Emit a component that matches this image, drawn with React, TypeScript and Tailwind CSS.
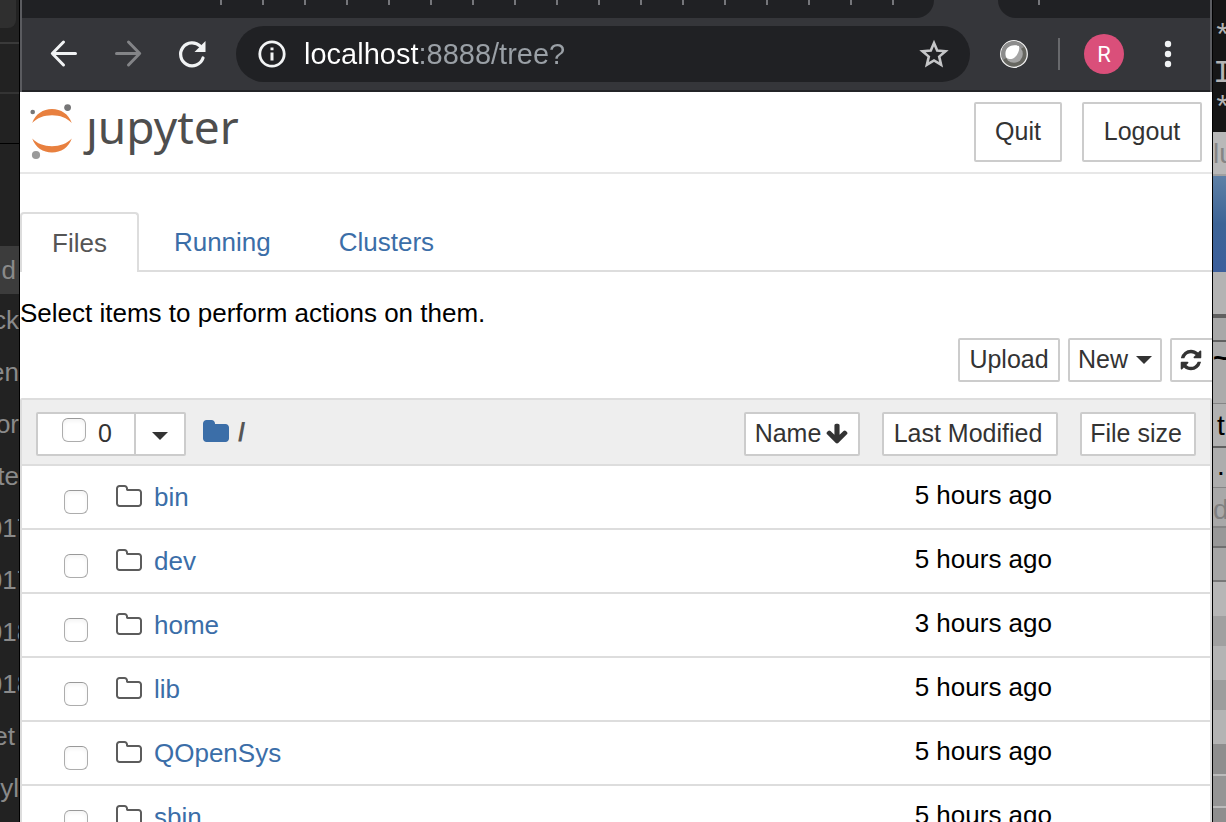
import type { ReactNode } from "react";

const FOLDER_OPEN_PATH =
  "M1600 1312v-704q0-40-28-68t-68-28h-704q-40 0-68-28t-28-68v-64q0-40-28-68t-68-28h-320q-40 0-68 28t-28 68v960q0 40 28 68t68 28h1216q40 0 68-28t28-68zm128-704v704q0 92-66 158t-158 66h-1216q-92 0-158-66t-66-158v-960q0-92 66-158t158-66h320q92 0 158 66t66 158v32h672q92 0 158 66t66 158z";
const FOLDER_PATH =
  "M1728 608v704q0 92-66 158t-158 66h-1216q-92 0-158-66t-66-158v-960q0-92 66-158t158-66h320q92 0 158 66t66 158v32h672q92 0 158 66t66 158z";
const REFRESH_PATH =
  "M1639 1056q0 5-1 7-64 268-268 434.5t-478 166.5q-146 0-282.5-55t-243.5-157l-129 129q-19 19-45 19t-45-19-19-45v-448q0-26 19-45t45-19h448q26 0 45 19t19 45-19 45l-137 137q71 66 161 102t187 36q134 0 250-65t186-179q11-17 53-117 8-23 30-23h192q13 0 22.5 9.5t9.5 22.5zm25-800v448q0 26-19 45t-45 19h-448q-26 0-45-19t-19-45 19-45l138-138q-148-137-349-137-134 0-250 65t-186 179q-11 17-53 117-8 23-30 23h-199q-13 0-22.5-9.5t-9.5-22.5v-7q65-268 270-434.5t480-166.5q146 0 284 55.5t245 156.5l130-129q19-19 45-19t45 19 19 45z";
const ARROW_DOWN_PATH =
  "M1675 832q0 53-37 90l-651 652q-39 37-91 37-53 0-90-37l-651-652q-38-36-38-90 0-53 38-91l74-75q39-37 91-37 53 0 90 37l294 294v-704q0-52 38-90t90-38h128q52 0 90 38t38 90v704l294-294q37-37 90-37 52 0 91 37l75 75q37 39 37 91z";

function Glyph({ d, className }: { d: string; className: string }) {
  return (
    <svg viewBox="0 0 1792 1792" fill="currentColor" aria-hidden="true" className={className}>
      <path d={d} />
    </svg>
  );
}

function Caret() {
  return (
    <svg viewBox="0 0 16 8" fill="currentColor" aria-hidden="true" className="h-2 w-4 shrink-0">
      <path d="M0 0h16L8 8z" />
    </svg>
  );
}

const sidebarItems = [
  { text: "d", className: "h-12 justify-end bg-[#3c3c3c] pr-[3px]" },
  { text: "ck", className: "h-[52px] justify-end" },
  { text: "en", className: "h-[52px] justify-end" },
  { text: "or", className: "h-[52px] justify-end" },
  { text: "te", className: "h-[52px] justify-end" },
  { text: "017", className: "h-[52px] justify-center" },
  { text: "017", className: "h-[52px] justify-center" },
  { text: "018", className: "h-[52px] justify-center" },
  { text: "018", className: "h-[52px] justify-center" },
  { text: "et", className: "h-[52px] justify-end pr-1" },
  { text: "yl", className: "h-[52px] justify-end" },
];

function LeftBackdrop() {
  return (
    <div className="flex w-5 shrink-0 flex-col overflow-hidden border-r border-black bg-[#222] text-[26px] text-[#8a8a8a]">
      <div className="h-11 shrink-0 border-b-2 border-[#3a3a3a]">
        <div className="h-7 w-4 rounded-br-lg bg-[#2f2f2f]" />
      </div>
      <div className="h-[50px] shrink-0 border-b-2 border-[#343434]" />
      <div className="h-[50px] shrink-0 border-b border-black" />
      <div className="h-[102px] shrink-0" />
      {sidebarItems.map((item, i) => (
        <div key={i} className={`flex shrink-0 items-center overflow-hidden ${item.className}`}>
          {item.text}
        </div>
      ))}
    </div>
  );
}

function RightBackdrop() {
  return (
    <div className="flex w-[14px] shrink-0 flex-col overflow-hidden border-l border-black bg-[#a4a4a4] text-[28px] text-black *:shrink-0">
      <div className="h-[132px] overflow-hidden bg-[#161616] pt-5 font-['Liberation_Mono'] text-[32px] leading-9 text-[#b4b4b4]">
        <div>*</div>
        <div>I</div>
        <div>*</div>
      </div>
      <div className="h-11 overflow-hidden border-b-2 border-[#a0a0a0] bg-[#b8b8b8] leading-[44px] text-[#858585]">lu</div>
      <div className="h-24 bg-linear-to-b from-[#5e80a6] via-[#3d6496] to-[#3c5f9c]" />
      <div className="h-[46px] border-b-4 border-[#606060] bg-[#b3b3b3]" />
      <div className="h-6 border-b-2 border-[#606060] bg-[#a8a8a8]" />
      <div className="h-[62px] overflow-hidden border-b border-[#858585] bg-[#ababab] leading-8 font-bold">~</div>
      <div className="h-11 overflow-hidden border-b-2 border-[#606060] bg-[#b1b1b1] pl-1 leading-[44px]">t</div>
      <div className="h-10 overflow-hidden border-b border-[#858585] bg-[#adadad] pl-1 leading-9">.</div>
      <div className="h-10 overflow-hidden border-b-2 border-[#858585] bg-[#a8a8a8] leading-[44px] text-[#808080]">d</div>
      <div className="h-5 border-b-2 border-[#707070] bg-[#989898]" />
      <div className="h-[34px] border-b-2 border-[#777] bg-[#a6a6a6]" />
      <div className="h-[34px] bg-[#b6b6b6]" />
      <div className="h-[30px] bg-[#a0a0a0]" />
      <div className="h-[34px] bg-[#b4b4b4]" />
      <div className="h-[30px] bg-[#9d9d9d]" />
      <div className="h-[34px] bg-[#b4b4b4]" />
      <div className="h-8 border-b-2 border-[#bbb] bg-[#8e8e8e]" />
      <div className="h-8 border-b-2 border-[#bbb] bg-[#959595]" />
      <div className="h-8 bg-[#8e8e8e]" />
    </div>
  );
}

function BrowserTabs() {
  return (
    <div className="flex h-[18px] justify-between gap-16 bg-[#35363a]">
      <div className="flex flex-1 overflow-hidden rounded-br-[18px] bg-[#202124] pl-[198px]">
        {Array.from({ length: 17 }, (_, i) => (
          <span key={i} className="h-[5px] w-[42px] shrink-0 border-l-2 border-[#75767a]" />
        ))}
      </div>
      <div className="w-[212px] rounded-bl-[18px] bg-[#202124] pl-10">
        <span className="block h-[5px] w-0 border-l-2 border-[#75767a]" />
      </div>
    </div>
  );
}

function BrowserToolbar() {
  return (
    <div className="flex h-[74px] items-center border-b-2 border-[#232427] bg-[#35363a] px-[26px] text-[#f1f3f4]">
      <button aria-label="Back" className="size-8">
        <svg viewBox="0 0 32 32" fill="none" stroke="currentColor" strokeWidth="3" strokeLinecap="round" strokeLinejoin="round">
          <path d="M27.500 15.500H4.500M15.500 4L4.300 15.500L15.500 27" />
        </svg>
      </button>
      <button aria-label="Forward" className="ml-8 size-8 text-[#838487]">
        <svg viewBox="0 0 32 32" fill="none" stroke="currentColor" strokeWidth="3" strokeLinecap="round" strokeLinejoin="round">
          <path d="M4.500 15.500H27.500M16.500 4L27.700 15.500L16.500 27" />
        </svg>
      </button>
      <button aria-label="Reload" className="ml-8 size-8">
        <svg viewBox="0 0 32 32" fill="none" stroke="currentColor" strokeWidth="3.200">
          <path d="M27 20A11.500 11.500 0 1 1 24.300 8.200" strokeLinecap="round" />
          <path d="M29.500 3V14H18.500Z" fill="currentColor" stroke="none" />
        </svg>
      </button>
      <div className="ml-7 flex h-14 min-w-0 flex-1 items-center rounded-full bg-[#202124] pr-[21px] pl-[22px]">
        <svg viewBox="0 0 28 28" fill="none" stroke="currentColor" strokeWidth="2.800" aria-hidden="true" className="size-7 shrink-0">
          <circle cx="14" cy="14" r="12.200" />
          <path d="M14 12.500V20.500M14 7.500V10.300" strokeWidth="3" />
        </svg>
        <input
          type="text"
          aria-label="Address"
          defaultValue="localhost:8888/tree?"
          className="ml-[18px] min-w-0 flex-1 bg-linear-to-r from-white from-[115px] to-[#9aa0a6] to-[115px] bg-clip-text pt-0.5 text-[29px] text-transparent outline-none"
        />
        <button aria-label="Bookmark" className="size-[30px] text-[#c5c6c8]">
          <svg viewBox="0 0 30 30" fill="none" stroke="currentColor" strokeWidth="2.600">
            <path d="M15 4L18.200 11.500L26.500 12.200L20.200 17.600L22.100 25.700L15 21.400L7.900 25.700L9.800 17.600L3.500 12.200L11.800 11.500Z" />
          </svg>
        </button>
      </div>
      <button aria-label="Extension" className="ml-[30px] size-7">
        <svg viewBox="0 0 28 28">
          <circle cx="14" cy="14" r="13.300" fill="#666660" stroke="#f0f0f0" strokeWidth="1.300" />
          <path d="M3 20A12 12 0 0 1 24 7Z" fill="#8c8c8c" />
          <circle cx="14" cy="14" r="8.800" fill="#a5a5a5" />
          <path d="M6 17C3.500 8 11 3.500 19 6C20.500 13 14 20.500 8.500 18.800Q6.800 18.500 6 17Z" fill="#fff" />
        </svg>
      </button>
      <span className="ml-[30px] h-8 w-0.5 bg-[#68696c]" />
      <button aria-label="Profile" className="ml-6 size-10 rounded-full bg-[#da4f7a] font-[Roboto] text-[22px] text-white">
        R
      </button>
      <button aria-label="Browser menu" className="ml-7 h-8 w-8">
        <svg viewBox="0 0 32 32" fill="currentColor">
          <circle cx="16" cy="6" r="3.200" />
          <circle cx="16" cy="16" r="3.200" />
          <circle cx="16" cy="26" r="3.200" />
        </svg>
      </button>
    </div>
  );
}

function JupyterLogo() {
  return (
    <a href="#tree" aria-label="jupyter" className="flex h-[60px] items-center gap-3 text-[#4e4e4e]">
      <svg viewBox="0 0 44 60" aria-hidden="true" className="h-[60px] w-11">
        <path d="M2.200 21C5.500 12 13 7 22 7S38.500 12 41.800 21C37 16 30 13.300 22 13.300S7 16 2.200 21Z" fill="#e8803f" />
        <path d="M2.200 36.500C5.500 45.500 13 50.500 22 50.500S38.500 45.500 41.800 36.500C37 41.500 30 44.200 22 44.200S7 41.500 2.200 36.500Z" fill="#e8803f" />
        <circle cx="2.700" cy="10" r="2.300" fill="#767677" />
        <circle cx="37.600" cy="5.600" r="3.400" fill="#767677" />
        <circle cx="6" cy="53" r="4.100" fill="#9a9a9a" />
      </svg>
      <span className="pb-3 font-['Noto_Sans'] text-[46px] leading-[52px]">ȷupyter</span>
    </a>
  );
}

function Button({ children, className, label }: { children: ReactNode; className: string; label?: string }) {
  return (
    <button
      aria-label={label}
      className={`flex shrink-0 items-center justify-center rounded-[2px] border-2 border-[#ccc] bg-white text-[25px] whitespace-nowrap text-[#333] ${className}`}
    >
      {children}
    </button>
  );
}

function Checkbox({ label }: { label: string }) {
  return (
    <input
      type="checkbox"
      aria-label={label}
      className="size-6 shrink-0 appearance-none rounded-[6px] border border-[#adadad] border-t-[#999] bg-white inset-shadow-sm"
    />
  );
}

const files = [
  { name: "bin", modified: "5 hours ago" },
  { name: "dev", modified: "5 hours ago" },
  { name: "home", modified: "3 hours ago" },
  { name: "lib", modified: "5 hours ago" },
  { name: "QOpenSys", modified: "5 hours ago" },
  { name: "sbin", modified: "5 hours ago" },
];

function FileTable() {
  return (
    <table className="mt-4 w-full border-separate border-spacing-0 rounded-t-[2px] border-2 border-[#ddd] text-[26px]">
      <thead>
        <tr className="h-[66px] bg-[#eee] *:border-b-2 *:border-[#ddd] *:p-0 *:pt-1 *:font-normal">
          <th scope="col">
            <div className="flex items-center pl-[14px]">
              <div className="flex h-11 items-stretch rounded-[2px] border-2 border-[#ccc] bg-white text-[#333]">
                <label className="flex w-[98px] items-center gap-3 border-r-2 border-[#ccc] pl-6">
                  <span className="flex pb-2">
                    <Checkbox label="Select all" />
                  </span>
                  <span className="text-[25px]">0</span>
                </label>
                <button aria-label="Select by type" className="flex w-12 items-center justify-center pt-1">
                  <Caret />
                </button>
              </div>
              <a href="#root" aria-label="Root folder" className="ml-4 pb-1 text-[#3b6ea8]">
                <Glyph d={FOLDER_PATH} className="size-7" />
              </a>
              <span className="ml-2 pb-1 font-bold text-[#555]">/</span>
            </div>
          </th>
          <th scope="col" className="w-[116px]">
            <Button className="h-11 w-full gap-1">
              Name <Glyph d={ARROW_DOWN_PATH} className="size-6" />
            </Button>
          </th>
          <th scope="col" className="w-[198px]">
            <div className="pl-[22px]">
              <Button className="h-11 w-full pr-1">Last Modified</Button>
            </div>
          </th>
          <th scope="col" className="w-[152px]">
            <div className="pr-[14px] pl-[22px]">
              <Button className="h-11 w-full pr-1">File size</Button>
            </div>
          </th>
        </tr>
      </thead>
      <tbody>
        {files.map((file) => (
          <tr key={file.name} className="h-16 *:border-b-2 *:border-[#ddd] *:p-0">
            <td colSpan={2}>
              <div className="flex items-center pl-[42px]">
                <span className="flex pt-[10px]">
                  <Checkbox label={`Select ${file.name}`} />
                </span>
                <Glyph d={FOLDER_OPEN_PATH} className="ml-[27px] size-7 text-[#5c5c5c]" />
                <a href={`#${file.name}`} className="ml-[11px] text-[#3b6ea8]">
                  {file.name}
                </a>
              </div>
            </td>
            <td className="text-right">
              <div className="pr-[6px] pb-1 text-black">{file.modified}</div>
            </td>
            <td />
          </tr>
        ))}
      </tbody>
    </table>
  );
}

function Notebook() {
  return (
    <div className="shrink-0">
      <header className="flex h-[82px] items-center justify-between border-b-2 border-[#e7e7e7] px-[10px]">
        <JupyterLogo />
        <div className="flex gap-5">
          <Button className="h-[60px] w-[88px]">Quit</Button>
          <Button className="h-[60px] w-[120px]">Logout</Button>
        </div>
      </header>
      <nav className="mt-[38px] flex h-[60px] items-stretch text-[26px] text-[#3b6ea8]">
        <a href="#files" aria-current="page" className="flex items-center rounded-t-[4px] border-2 border-b-0 border-[#ddd] px-[30px] text-[#555]">
          Files
        </a>
        <div className="flex flex-1 items-center gap-[68px] border-b-2 border-[#ddd] pt-0.5 pl-[35px]">
          <a href="#running">Running</a>
          <a href="#clusters">Clusters</a>
        </div>
      </nav>
      <main>
        <p className="mt-5 text-[26px] leading-[42px] text-black">Select items to perform actions on them.</p>
        <div className="mt-1 flex justify-end gap-2 overflow-hidden">
          <Button className="h-11 w-[102px]">Upload</Button>
          <Button className="h-11 w-[94px] gap-2">
            New <Caret />
          </Button>
          <Button label="Refresh" className="-mr-1 h-11 w-[46px] pr-1">
            <Glyph d={REFRESH_PATH} className="size-6" />
          </Button>
        </div>
        <FileTable />
      </main>
    </div>
  );
}

export default function App() {
  return (
    <div className="flex h-screen overflow-hidden bg-black font-['Liberation_Sans',sans-serif]">
      <LeftBackdrop />
      <div className="flex min-w-0 flex-1 flex-col bg-white">
        <div className="shrink-0 border-x-2 border-[#5b5c60]">
          <BrowserTabs />
          <BrowserToolbar />
        </div>
        <Notebook />
      </div>
      <RightBackdrop />
    </div>
  );
}
